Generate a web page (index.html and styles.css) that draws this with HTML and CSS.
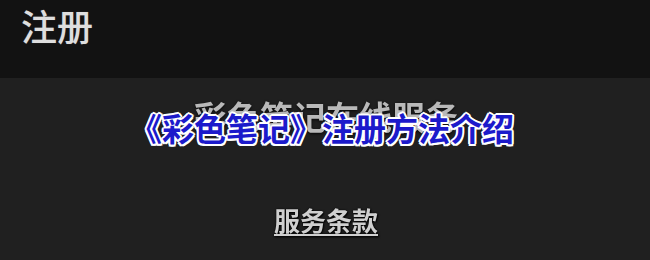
FILE: index.html
```html
<!DOCTYPE html>
<html lang="zh-CN">
<head>
<meta charset="utf-8">
<link rel="stylesheet" href="styles.css">
</head>
<body>
<div class="page">
  <header class="topbar"><h1 class="title">注册</h1></header>
  <main class="content">
    <div class="service">彩色笔记在线服务</div>
    <a class="terms">服务条款</a>
    <div class="caption">《彩色笔记》注册方法介绍</div>
  </main>
</div>
</body>
</html>
```
FILE: styles.css
```css
html, body {
  margin: 0;
  padding: 0;
  background: #202020;
}
.page {
  width: 650px;
  height: 260px;
  overflow: hidden;
  font-family: "Noto Sans CJK SC", "Noto Sans", sans-serif;
}
.topbar {
  height: 78px;
  background: #121212;
  padding-left: 21px;
  box-sizing: border-box;
}
.title {
  margin: 0;
  font-size: 36px;
  font-weight: 500;
  line-height: 50px;
  color: #dedede;
  text-shadow: 0 0 1px rgba(255,255,255,0.3);
}
.content {
  position: relative;
  height: 182px;
  background: #202020;
  display: flex;
  flex-direction: column;
  align-items: center;
}
.service {
  margin-top: 18px;
  margin-left: 2px;
  font-size: 33px;
  font-weight: 700;
  line-height: 40px;
  color: #b9b9b9;
  filter: blur(0.7px);
  text-shadow: 0 1px 3px rgba(0,0,0,0.8);
}
.terms {
  margin-top: 68px;
  margin-left: 2px;
  font-size: 26px;
  font-weight: 700;
  line-height: 32px;
  color: #cfcfcf;
  text-decoration: underline;
  text-underline-offset: 3px;
  text-decoration-thickness: 2px;
  filter: blur(0.4px);
  text-shadow: 1px 1px 2px #000, 0 0 2px #000;
}
.caption {
  position: absolute;
  left: 130px;
  top: 27px;
  font-size: 32px;
  font-weight: 700;
  line-height: 44px;
  color: #1c1acb;
  text-shadow:
    2px 0 0 #fff, -2px 0 0 #fff, 0 2px 0 #fff, 0 -2px 0 #fff,
    1.5px 1.5px 0 #fff, -1.5px 1.5px 0 #fff, 1.5px -1.5px 0 #fff, -1.5px -1.5px 0 #fff;
}
```
